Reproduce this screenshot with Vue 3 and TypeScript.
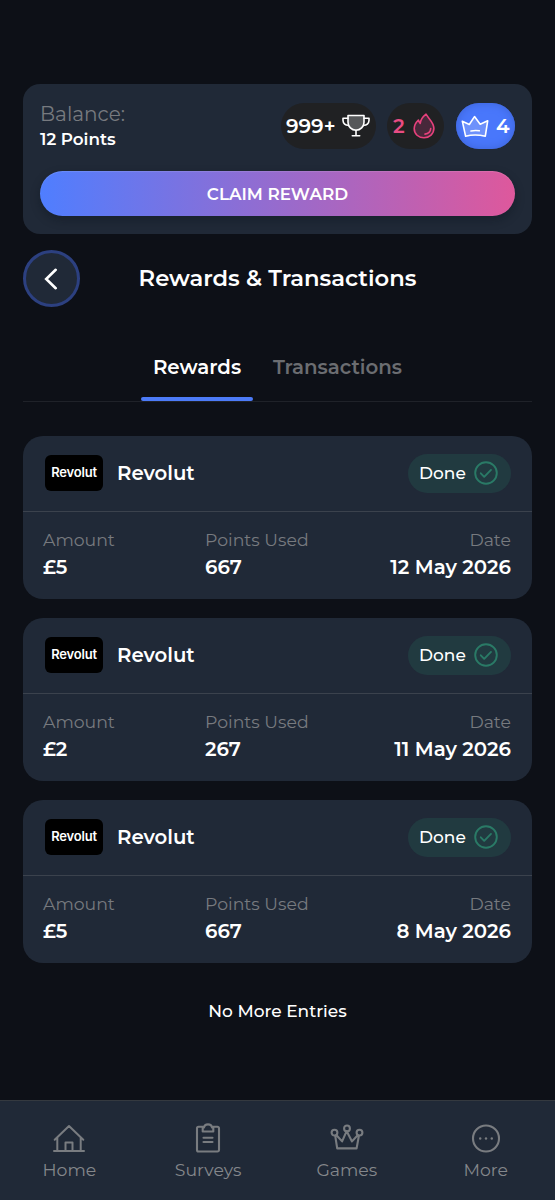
<script setup lang="ts">
interface Reward {
  amount: string
  points: string
  date: string
}

const rewards: Reward[] = [
  { amount: '£5', points: '667', date: '12 May 2026' },
  { amount: '£2', points: '267', date: '11 May 2026' },
  { amount: '£5', points: '667', date: '8 May 2026' },
]
</script>

<template>
  <div class="screen">
    <section class="balance-card">
      <div class="balance-row">
        <div class="balance">
          <div class="balance-label">Balance:</div>
          <div class="balance-value">12 Points</div>
        </div>
        <div class="pills">
          <div class="pill trophy">
            <span>999+</span>
            <svg width="28" height="24" viewBox="0 0 28 24" fill="none" stroke="#fff" stroke-width="1.6" stroke-linecap="round" stroke-linejoin="round">
              <path d="M6 1.5h16v6.7a8 8 0 0 1-16 0z" fill="#56585a" />
              <path d="M6 4.3H1v2.2a5 5 0 0 0 5.4 4.8M22 4.3h5v2.2a5 5 0 0 1-5.4 4.8M14 16.3v5.2M10.3 21.8h7.4" />
            </svg>
          </div>
          <div class="pill fire">
            <span>2</span>
            <svg width="22" height="26" viewBox="0 0 22 26" fill="none" stroke="#e7417c" stroke-width="1.6" stroke-linecap="round" stroke-linejoin="round">
              <path d="M13 1.2C9.6 3.9 7.6 7 7.2 10.4 6.3 9.5 5.7 8.4 5.4 7 2.6 9.7 1.200 12.500 1.200 15.600 1.200 21 5.500 24.800 11 24.800s9.900-3.900 9.900-9.500C20.900 9.500 16.500 6.800 13 1.200z" fill="#47283a" />
              <path d="M17.700 15.500c-.2 3.100-2.300 5.200-5.700 5.600" />
            </svg>
          </div>
          <div class="pill crown">
            <svg width="28" height="23" viewBox="0 0 28 23" fill="none" stroke="#fff" stroke-width="1.6" stroke-linecap="round" stroke-linejoin="round">
              <path d="M1.300 6.200 8.300 9.500 13.500 1.600 19.200 9.200 26.700 5.800 24.300 21.200Q14 18.900 4.600 21.200z" fill="#6e91fb" />
              <path d="M10 16q4-.8 8.300-.2" />
            </svg>
            <span>4</span>
          </div>
        </div>
      </div>
      <button class="claim">CLAIM REWARD</button>
    </section>

    <header class="title-row">
      <button class="back" aria-label="Back">
        <svg width="14" height="22" viewBox="0 0 14 22" fill="none" stroke="#fff" stroke-width="2.600" stroke-linecap="round" stroke-linejoin="miter">
          <path d="M11.700 1.800 2.200 11l9.500 9.200" />
        </svg>
      </button>
      <h1>Rewards &amp; Transactions</h1>
    </header>

    <nav class="tabs">
      <div class="tab active">Rewards</div>
      <div class="tab other">Transactions</div>
    </nav>

    <main class="list">
      <article v-for="(r, i) in rewards" :key="i" class="card">
        <div class="card-head">
          <div class="logo">Revolut</div>
          <div class="name">Revolut</div>
          <div class="done">
            <span>Done</span>
            <svg width="24" height="24" viewBox="0 0 24 24" fill="none" stroke="#2a7a66" stroke-width="1.900" stroke-linecap="round" stroke-linejoin="round">
              <circle cx="12" cy="12" r="10.800" />
              <path d="m6.800 12.300 3.400 3.500 6.800-6.900" />
            </svg>
          </div>
        </div>
        <div class="card-body">
          <div class="field">
            <div class="label">Amount</div>
            <div class="value">{{ r.amount }}</div>
          </div>
          <div class="field">
            <div class="label">Points Used</div>
            <div class="value">{{ r.points }}</div>
          </div>
          <div class="field right">
            <div class="label">Date</div>
            <div class="value">{{ r.date }}</div>
          </div>
        </div>
      </article>
    </main>

    <p class="end">No More Entries</p>

    <footer class="bottom">
      <div class="item">
        <svg width="34" height="30" viewBox="0 0 34 30" fill="none" stroke="#797c80" stroke-width="2" stroke-linecap="round" stroke-linejoin="round">
          <path d="M2 28h30M5.300 28V14.500M28.700 28V14.500M2.700 16.800 17 3l14.300 13.800M13.500 28v-8.500h7V28" />
        </svg>
        <span>Home</span>
      </div>
      <div class="item">
        <svg width="34" height="30" viewBox="0 0 34 30" fill="none" stroke="#797c80" stroke-width="2.1" stroke-linecap="round" stroke-linejoin="round">
          <path d="M11.700 3.800H7.500a1.500 1.500 0 0 0-1.500 1.500v21.700A1.500 1.500 0 0 0 7.500 28.500h19A1.500 1.500 0 0 0 28 27V5.300a1.500 1.500 0 0 0-1.500-1.500h-4.200M11.700 4.500h1.200c.8-4.200 7.400-4.200 8.200 0h1.200v4H11.700zM12.500 14.700h9M12.500 19h9" />
        </svg>
        <span>Surveys</span>
      </div>
      <div class="item">
        <svg width="34" height="30" viewBox="0 0 34 30" fill="none" stroke="#797c80" stroke-width="2.1" stroke-linecap="round" stroke-linejoin="round">
          <path d="M5.300 13.300 7.200 25.400h19.400L28.800 13.300M6.500 12.300l5.600 6.100 4.500-10.300 5.400 10.300 5.700-6.100" />
          <circle cx="4.500" cy="9.600" r="2.900" /><circle cx="17" cy="5.400" r="2.900" /><circle cx="29.500" cy="9.600" r="2.900" />
        </svg>
        <span>Games</span>
      </div>
      <div class="item">
        <svg width="34" height="30" viewBox="0 0 34 30" fill="none" stroke="#797c80" stroke-width="2.1">
          <circle cx="17" cy="15.500" r="13" />
          <g fill="#797c80" stroke="none"><circle cx="11.200" cy="15.500" r="1.200" /><circle cx="17" cy="15.500" r="1.200" /><circle cx="22.800" cy="15.500" r="1.200" /></g>
        </svg>
        <span>More</span>
      </div>
    </footer>
  </div>
</template>

<style>
body {
  background: #0d1017;
}
</style>

<style scoped>
.screen {
  box-sizing: border-box;
  height: 1200px;
  padding-top: 84px;
  display: flex;
  flex-direction: column;
  background: #0d1017;
  color: #fff;
  font-family: Montserrat, Inter, 'Liberation Sans', sans-serif;
  font-weight: 500;
  white-space: nowrap;
  overflow: hidden;
}
button {
  font: inherit;
  color: inherit;
  border: 0;
  padding: 0;
}
.balance-card {
  box-sizing: border-box;
  height: 150px;
  margin: 0 23px;
  padding: 19px 17px 0;
  border-radius: 17px;
  background: #202937;
}
.balance-row {
  display: flex;
  justify-content: space-between;
  height: 46px;
}
.balance-label {
  height: 22px;
  line-height: 23px;
  font-size: 20px;
  font-weight: 400;
  color: #777a7f;
}
.balance-value {
  line-height: 28px;
  font-size: 16.8px;
  font-weight: 600;
}
.pills {
  display: flex;
}
.pill {
  box-sizing: border-box;
  display: flex;
  align-items: center;
  height: 46px;
  border-radius: 23px;
  background: #202123;
  font-size: 20px;
  font-weight: 600;
}
.trophy {
  width: 95px;
  padding-left: 5px;
  gap: 6px;
}
.trophy span {
  width: 50px;
}
.fire {
  width: 57px;
  margin-left: 11px;
  padding-left: 6px;
  gap: 8px;
  color: #e94c83;
}
.fire span {
  width: 12px;
}
.crown {
  width: 59px;
  margin-left: 12px;
  padding-left: 5px;
  gap: 7px;
  background: #4977fb;
  box-shadow: inset 0 0 8px #3c63d5;
}
.claim {
  display: block;
  width: 100%;
  height: 45px;
  margin-top: 22px;
  border-radius: 23px;
  background: linear-gradient(90deg, #4f7eff, #de589c);
  box-shadow: 0 4px 10px rgba(10, 16, 26, 0.35), inset 0 1px 1px rgba(255, 255, 255, 0.12);
  font-size: 16.8px;
  font-weight: 600;
  line-height: 44px;
}
.title-row {
  display: grid;
  grid-template-columns: 57px 1fr 57px;
  align-items: center;
  height: 57px;
  margin: 16px 23px 0;
}
.back {
  box-sizing: border-box;
  display: flex;
  align-items: center;
  justify-content: center;
  width: 57px;
  height: 57px;
  padding-right: 2px;
  border: 3px solid #2c4080;
  border-radius: 50%;
  background: #202937;
}
h1 {
  margin: 0;
  text-align: center;
  font-size: 22.7px;
  line-height: 56px;
  height: 57px;
  font-weight: 600;
}
.tabs {
  box-sizing: border-box;
  display: flex;
  height: 69px;
  margin: 26px 23px 0;
  padding-left: 118px;
  border-bottom: 1px solid #1f2229;
}
.tab {
  box-sizing: border-box;
  height: 68px;
  line-height: 68px;
  font-size: 19.8px;
  font-weight: 600;
  text-align: center;
}
.active {
  display: flex;
  flex-direction: column;
  width: 112px;
}
.active::after {
  content: '';
  height: 4px;
  margin-top: -4px;
  border-radius: 2px;
  background: #4c7bf8;
}
.other {
  width: 169px;
  color: #6b6d71;
}
.list {
  display: flex;
  flex-direction: column;
  gap: 19px;
  margin: 34px 23px 0;
}
.card {
  height: 163px;
  border-radius: 20px;
  background: #202937;
}
.card-head {
  box-sizing: border-box;
  display: flex;
  align-items: center;
  height: 76px;
  padding: 0 21px 1px 22px;
  border-bottom: 1px solid #3b424d;
}
.logo {
  width: 58px;
  height: 36px;
  border-radius: 6px;
  background: #000;
  text-align: center;
  font-family: Inter, sans-serif;
  font-size: 13px;
  line-height: 35px;
  font-weight: 600;
  letter-spacing: -0.2px;
}
.name {
  margin-left: 14px;
  font-size: 19.7px;
  font-weight: 600;
}
.done {
  box-sizing: border-box;
  display: flex;
  align-items: center;
  width: 103px;
  height: 39px;
  margin-left: auto;
  padding-left: 11px;
  border-radius: 20px;
  background: #213a40;
  font-size: 17px;
}
.done span {
  width: 55px;
}
.card-body {
  display: grid;
  grid-template-columns: 162px 160px 1fr;
  padding: 15px 21px 0 20px;
}
.label {
  height: 27px;
  line-height: 26px;
  font-size: 17.3px;
  font-weight: 400;
  color: #777a7f;
}
.value {
  height: 28px;
  line-height: 27px;
  font-size: 19.8px;
  font-weight: 600;
}
.right {
  text-align: right;
}
.end {
  margin: 37px 0 0;
  text-align: center;
  font-size: 17px;
  line-height: 22px;
}
.bottom {
  box-sizing: border-box;
  display: grid;
  grid-template-columns: repeat(4, 138.750px);
  height: 100px;
  margin-top: auto;
  padding-top: 22px;
  border-top: 1px solid #34393f;
  background: #202937;
}
.item {
  display: flex;
  flex-direction: column;
  align-items: center;
  font-size: 17.3px;
  line-height: 33px;
  font-weight: 400;
  color: #84878b;
}
</style>
